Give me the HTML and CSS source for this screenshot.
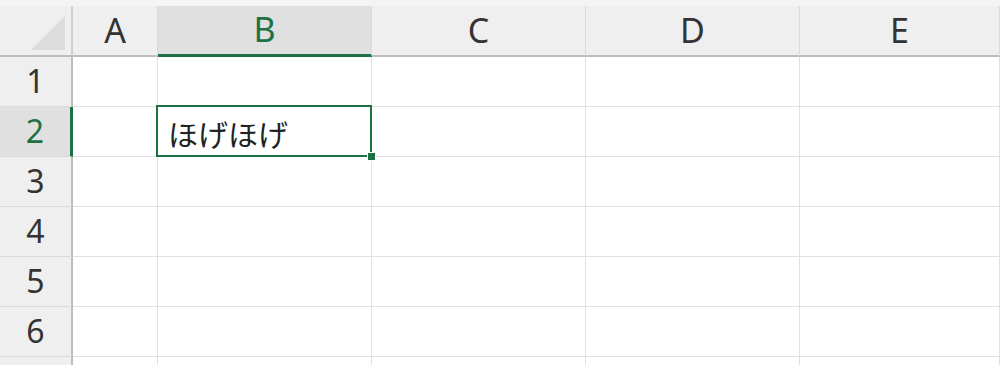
FILE: index.html
```html
<!DOCTYPE html>
<html>
<head>
  <meta charset="utf-8">
  <title>Sheet1</title>
  <link rel="stylesheet" href="styles.css">
</head>
<body>
  <div class="sheet">
    <!-- Column headers -->
    <div class="corner"><span class="corner-tri"></span></div>
    <div class="col-head">A</div>
    <div class="col-head selected">B</div>
    <div class="col-head">C</div>
    <div class="col-head">D</div>
    <div class="col-head">E</div>

    <!-- Row 1 -->
    <div class="row-head">1</div>
    <div class="cell"></div>
    <div class="cell"></div>
    <div class="cell"></div>
    <div class="cell"></div>
    <div class="cell"></div>

    <!-- Row 2 -->
    <div class="row-head selected">2</div>
    <div class="cell"></div>
    <div class="cell active">
      ほげほげ
      <span class="fill-handle"></span>
    </div>
    <div class="cell"></div>
    <div class="cell"></div>
    <div class="cell"></div>

    <!-- Row 3 -->
    <div class="row-head">3</div>
    <div class="cell"></div>
    <div class="cell"></div>
    <div class="cell"></div>
    <div class="cell"></div>
    <div class="cell"></div>

    <!-- Row 4 -->
    <div class="row-head">4</div>
    <div class="cell"></div>
    <div class="cell"></div>
    <div class="cell"></div>
    <div class="cell"></div>
    <div class="cell"></div>

    <!-- Row 5 -->
    <div class="row-head">5</div>
    <div class="cell"></div>
    <div class="cell"></div>
    <div class="cell"></div>
    <div class="cell"></div>
    <div class="cell"></div>

    <!-- Row 6 -->
    <div class="row-head">6</div>
    <div class="cell"></div>
    <div class="cell"></div>
    <div class="cell"></div>
    <div class="cell"></div>
    <div class="cell"></div>

    <!-- Row 7 (cut off) -->
    <div class="row-head"></div>
    <div class="cell"></div>
    <div class="cell"></div>
    <div class="cell"></div>
    <div class="cell"></div>
    <div class="cell"></div>
  </div>
</body>
</html>
```

FILE: styles.css
```css
html, body {
  margin: 0;
  padding: 0;
  height: 100%;
  overflow: hidden;
}

body {
  background-color: #fff;
  font-family: 'Noto Sans', 'Noto Sans CJK JP', sans-serif;
  color: #333;
}

/* Grid of the worksheet */
.sheet {
  display: grid;
  grid-template-columns: 73px 85px 214px 214px 214px 200px;
  grid-template-rows: 51px repeat(7, 50px);
  border-top: 6px solid #f4f4f6;
}

/* Column headers */
.corner,
.col-head {
  background-color: #efefef;
  border-bottom: 2px solid #bdbdbd;
  box-sizing: border-box;
}

.corner {
  border-right: 2px solid #cfcfcf;
  position: relative;
}

.corner-tri {
  position: absolute;
  right: 6px;
  bottom: 5px;
  width: 0;
  height: 0;
  border-left: 34px solid transparent;
  border-bottom: 34px solid #dcdcdc;
}

.col-head {
  border-right: 1px solid #dadada;
  display: flex;
  justify-content: center;
  align-items: center;
  font-size: 34px;
  line-height: 1;
  padding-bottom: 2px;
}

.col-head.selected {
  background-color: #e0e0e0;
  border-bottom: 3px solid #1e7145;
  color: #1e7145;
}

/* Row headers */
.row-head {
  background-color: #efefef;
  border-right: 2px solid #bdbdbd;
  border-bottom: 1px solid #dadada;
  box-sizing: border-box;
  display: flex;
  justify-content: center;
  align-items: center;
  font-size: 32px;
  line-height: 1;
  padding-bottom: 2px;
}

.row-head.selected {
  background-color: #e0e0e0;
  border-right: 3px solid #1e7145;
  color: #1e7145;
}

/* Cells */
.cell {
  border-right: 1px solid #e1e1e1;
  border-bottom: 1px solid #e1e1e1;
  box-sizing: border-box;
  display: flex;
  align-items: center;
  font-size: 30px;
  color: #222;
}

.cell.active {
  position: relative;
  z-index: 2;
  padding-left: 10px;
  padding-top: 2px;
}

/* Selection border drawn over the grid */
.cell.active::before {
  content: "";
  position: absolute;
  top: -2px;
  left: -2px;
  right: -1px;
  bottom: -1px;
  border: 2px solid #1e7145;
  pointer-events: none;
}

.fill-handle {
  position: absolute;
  right: -5px;
  bottom: -5px;
  width: 7px;
  height: 7px;
  background-color: #1e7145;
  border: 1px solid #fff;
}
```
